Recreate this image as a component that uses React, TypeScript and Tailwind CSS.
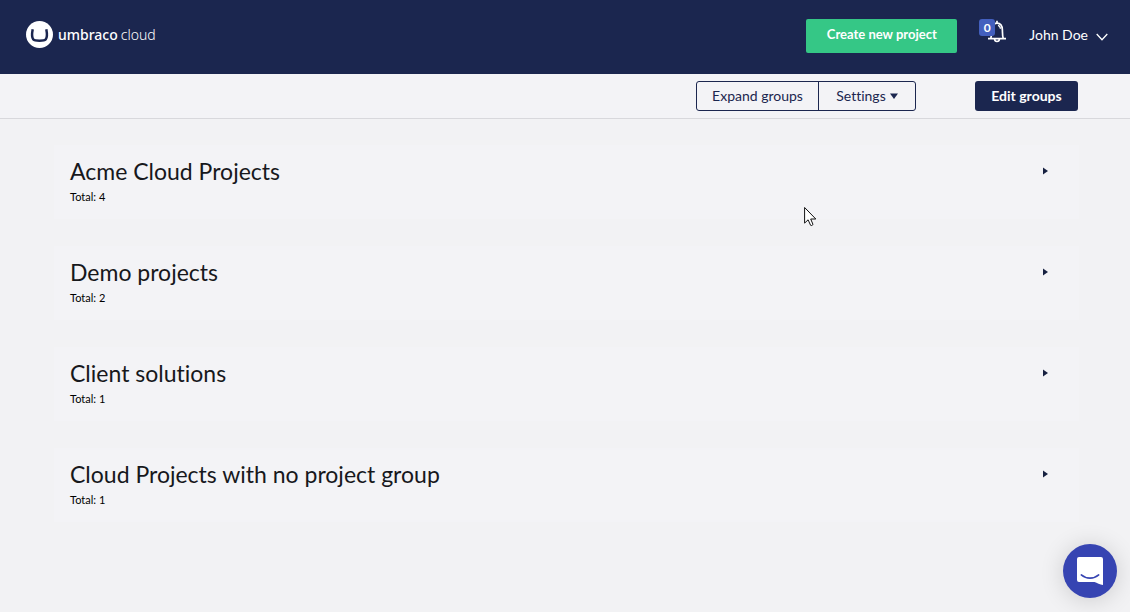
type Group = { name: string; total: number };

const groups: Group[] = [
  { name: "Acme Cloud Projects", total: 4 },
  { name: "Demo projects", total: 2 },
  { name: "Client solutions", total: 1 },
  { name: "Cloud Projects with no project group", total: 1 },
];

function Logo() {
  return (
    <a href="#" aria-label="umbraco cloud" className="flex items-center gap-1 text-white">
      <svg width="28" height="28" viewBox="0 0 28 28" aria-hidden="true">
        <circle cx="13.5" cy="13.5" r="13.5" fill="#fff" />
        <path
          d="M6.700 8.200c-.8 4-.8 8.500.6 10.200 1.600 1.700 10.800 1.700 12.400 0 1.400-1.700 1.400-6.200.6-10.200"
          fill="none"
          stroke="#1b264f"
          strokeWidth="2.500"
        />
      </svg>
      <span className="flex items-baseline gap-[3px] font-['Noto_Sans',sans-serif] text-sm leading-5">
        <span className="font-medium">umbraco</span>
        <span className="font-light">cloud</span>
      </span>
    </a>
  );
}

function Notifications() {
  return (
    <button type="button" aria-label="Notifications" className="relative flex h-6 w-7 items-end justify-end">
      <svg width="20" height="23" viewBox="0 0 20 23" fill="none" stroke="#fff" strokeWidth="1.7" aria-hidden="true">
        <path d="M10 .8v2.4M1 18.6h18M3.8 18.2c.8-2 .7-4.6.8-8 .1-4.3 2.2-7 5.4-7s5.300 2.700 5.400 7c.1 3.400 0 6 .8 8" />
        <path d="M11 5.300c1.500.4 2.300 1.700 2.400 3.500" strokeWidth="1.300" />
        <path d="M7.600 19c.1 1.700 1 2.500 2.400 2.500s2.300-.8 2.400-2.500" />
      </svg>
      <span className="absolute left-0 top-0 flex h-[17px] w-4 items-center justify-center rounded-[3px] bg-[#435fbe] text-xs font-bold leading-4 text-white">
        0
      </span>
    </button>
  );
}

function GroupCard({ name, total }: Group) {
  return (
    <section className="flex items-start justify-between bg-[#f3f3f6] pb-3.5 pl-4 pr-7 pt-3">
      <div>
        <h2 className="text-[23px] leading-7 text-[#17181c]">{name}</h2>
        <p className="pt-[3px] text-[11px] leading-[17px] text-black">Total: {total}</p>
      </div>
      <button type="button" aria-label={`Expand ${name}`} className="mt-2 flex h-3 w-3 items-center justify-center">
        <svg width="5" height="8" viewBox="0 0 5 8" aria-hidden="true">
          <path d="M0 .5v7L5 4z" fill="#162040" />
        </svg>
      </button>
    </section>
  );
}

export default function App() {
  return (
    <div className="min-h-screen bg-[#f2f2f4] font-['Lato',sans-serif] text-[#1b264f] [font-variant-ligatures:none]">
      <header className="flex h-[74px] items-center justify-between bg-[#1b264f] pb-1 pl-[26px] pr-[22px]">
        <Logo />
        <div className="flex items-center pt-0.5">
          <button
            type="button"
            className="h-[34px] w-[151px] rounded-xs bg-[#35c786] pb-0.5 text-[13px] font-bold text-white"
          >
            Create new project
          </button>
          <div className="ml-[22px] pb-2.5">
            <Notifications />
          </div>
          <button type="button" className="ml-[22px] flex items-center gap-2 pb-0.5 text-sm leading-5 text-white">
            John Doe
            <svg width="12" height="8" viewBox="0 0 12 8" fill="none" stroke="#fff" strokeWidth="1.3" className="mt-1" aria-hidden="true">
              <path d="M.7 1 6 6.700 11.300 1" />
            </svg>
          </button>
        </div>
      </header>

      <div className="flex h-[45px] items-center justify-end border-b border-[#d8d8dc] bg-[#f3f3f6] pr-[52px]">
        <div className="flex h-[30px] rounded-[3px] border border-[#1b264f] text-sm">
          <button type="button" className="w-[121px]">
            Expand groups
          </button>
          <button type="button" className="flex w-[97px] items-center justify-center gap-1 border-l border-[#1b264f]">
            Settings
            <svg width="8" height="6" viewBox="0 0 8 6" aria-hidden="true">
              <path d="M0 .5h8L4 6z" fill="#1b264f" />
            </svg>
          </button>
        </div>
        <button type="button" className="ml-[59px] h-[30px] w-[103px] rounded-[3px] bg-[#1b264f] text-sm font-bold text-white">
          Edit groups
        </button>
      </div>

      <main className="flex flex-col gap-[27px] pb-[86px] pl-[54px] pr-[51px] pt-[26px]">
        {groups.map((group) => (
          <GroupCard key={group.name} {...group} />
        ))}
      </main>

      <svg width="13" height="20" viewBox="0 0 13 20" className="pointer-events-none absolute left-[804px] top-[207px]" aria-hidden="true">
        <path
          d="M.6.500v15.600l3.500-3.300 2.500 5.500c.8.600 2.400 0 2.300-1.100L6.700 12h5.100z"
          fill="#fff"
          stroke="#111"
          strokeWidth="1"
        />
      </svg>

      <button
        type="button"
        aria-label="Open chat"
        className="fixed bottom-3.5 right-[13px] flex h-[54px] w-[54px] items-center justify-center rounded-full bg-[#3644b2] shadow-[0_2px_24px_rgba(0,0,0,0.16)]"
      >
        <svg width="26" height="28" viewBox="0 0 26 28" aria-hidden="true">
          <path d="M2 0h22a2 2 0 0 1 2 2v26c-3-.7-6-1.900-8.500-3H2a2 2 0 0 1-2-2V2a2 2 0 0 1 2-2z" fill="#fff" />
          <path d="M4.300 17.900c5 4.300 12.400 4.300 17.400 0" fill="none" stroke="#3644b2" strokeWidth="1.600" strokeLinecap="round" />
        </svg>
      </button>
    </div>
  );
}
